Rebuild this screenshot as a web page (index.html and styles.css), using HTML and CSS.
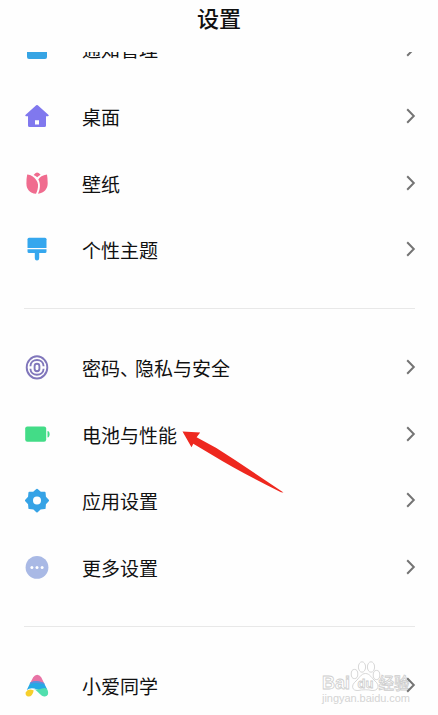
FILE: index.html
```html
<!DOCTYPE html>
<html lang="zh-CN">
<head>
<meta charset="utf-8">
<title>设置</title>
<link rel="stylesheet" href="styles.css">
</head>
<body>
<svg width="0" height="0" class="defs"><defs>
<symbol id="chev" viewBox="0 0 10 16"><path d="M1.2 1.2 7.800 8 1.200 14.800" fill="none" stroke="#747474" stroke-width="2"/></symbol>
</defs></svg>
<header class="title">设置</header>
<main class="list">
  <div class="row first"><svg class="icon" viewBox="0 0 26 26"><rect x="3" y="3" width="20" height="19" rx="2" fill="#36a4e4"/></svg><span class="label">通知管理</span><svg class="chev"><use href="#chev"/></svg></div>
  <div class="row"><svg class="icon" viewBox="0 0 26 26"><path fill="#8078ee" fill-rule="evenodd" d="M12.200 1.300Q13 .7 13.800 1.300L24.600 11Q25.200 12 24 12.200H22V21.500Q22 23 20.500 23H5.500Q4 23 4 21.500V12.200H2Q.8 12 1.400 11ZM11 16.200V20.500H15V16.200Z"/></svg><span class="label">桌面</span><svg class="chev"><use href="#chev"/></svg></div>
  <div class="row"><svg class="icon" viewBox="0 0 26 26"><g fill="#f06c8f"><path d="M3.200 3.500C7.500 3.700 13.400 8 14 13.500 14.300 17 13.200 20 12 22.800 5.500 22.500 2.400 18 2.400 12.500Q2.400 7.500 3.200 3.500Z"/><path d="M23 3.500C18.500 4 15.800 6 14.300 8.400 16.700 12.500 16.300 18 14 22.800 20.500 22 23.800 17.500 23.700 12Q23.600 7 23 3.500Z"/><path d="M9.600 4.100Q11.300 1.600 13 1.600T16.600 3.800Q14.500 4.800 13.200 6.300 11.600 4.900 9.600 4.100Z"/></g></svg><span class="label">壁纸</span><svg class="chev"><use href="#chev"/></svg></div>
  <div class="row"><svg class="icon" viewBox="0 0 26 26"><g fill="#35a7ee"><path d="M5 .8H21Q22.500.8 22.500 2.300V11H3.500V2.300Q3.500.8 5 .8Z"/><path d="M3.500 12.300H22.500V14.500Q22.500 16 21 16H15.200V21.300Q15.200 23.500 13 23.500T10.800 21.300V16H5Q3.500 16 3.500 14.500Z"/></g></svg><span class="label">个性主题</span><svg class="chev"><use href="#chev"/></svg></div>
  <div class="divider"></div>
  <div class="row"><svg class="icon" viewBox="0 0 26 26"><g fill="none" stroke="#8076bb" stroke-width="1.900"><ellipse cx="13" cy="12.400" rx="10.300" ry="11.100"/><path d="M6.400 11.200C6.700 3 19.300 3 19.600 11.200M19.600 13.800C19.300 21.800 6.700 21.800 6.400 13.800"/><rect x="10.600" y="8.800" width="4.800" height="7.400" rx="2.400"/></g></svg><span class="label">密码<span class="comma">、</span>隐私与安全</span><svg class="chev"><use href="#chev"/></svg></div>
  <div class="row"><svg class="icon" viewBox="0 0 26 26"><g fill="#43dc87"><rect x="1.200" y="4.400" width="21" height="15.400" rx="2.200"/><path d="M23.500 9Q25.600 9.200 25.600 12.200T23.500 15.400Z"/></g></svg><span class="label">电池与性能</span><svg class="chev"><use href="#chev"/></svg></div>
  <div class="row"><svg class="icon" viewBox="0 0 26 26"><path fill="#36a3e6" stroke="#36a3e6" stroke-width="2" stroke-linejoin="round" d="M13 1.700 16.200 4.400 20.600 4.800 21 9.300 24 12.500 21 15.700 20.600 20.100 16.200 20.600 13 23.400 9.800 20.600 5.400 20.100 5 15.700 2 12.500 5 9.300 5.400 4.800 9.800 4.400Z"/><circle cx="13" cy="12.500" r="4" fill="#fff"/></svg><span class="label">应用设置</span><svg class="chev"><use href="#chev"/></svg></div>
  <div class="row"><svg class="icon" viewBox="0 0 26 26"><circle cx="13" cy="12.400" r="11.400" fill="#a9b9e5"/><g fill="#fff"><circle cx="7.900" cy="12.600" r="1.500"/><circle cx="13" cy="12.600" r="1.500"/><circle cx="18.100" cy="12.600" r="1.500"/></g></svg><span class="label">更多设置</span><svg class="chev"><use href="#chev"/></svg></div>
  <div class="divider"></div>
  <div class="row"><svg class="icon" viewBox="0 0 26 26"><path fill="#e873a5" d="M6.200 10 9.200 4.300Q10.800 1.700 13.200 1.700T17.200 4.300L20.300 10.500Q13 8.500 6.200 10Z"/><path fill="#25a9e5" d="M6.400 9.500Q13 7 20 10L23 16 19 18 13 16.500Q7 14 2.800 17Z"/><path fill="#5b8fe0" d="M6.400 9.500Q13 7 20 10L20.800 11.600Q13 8.500 5.600 11.100Z"/><path fill="#f6cf2c" d="M1.600 19.500Q4 15 9.700 17.500 8.500 23.600 4.500 23.500 1.200 23.200 1.600 19.500Z"/><path fill="#51dfae" d="M9.700 16Q14 17.300 18 15.500 21.800 13.800 23.500 16.800 25.800 22.500 21 23.500C17 24 15 18.500 9.700 16Z"/></svg><span class="label">小爱同学</span><svg class="chev"><use href="#chev"/></svg></div>
</main>
<svg class="arrow" viewBox="0 0 106 66"><path fill="#ee281f" d="M2.500 1.500 20.200 2.400 16.600 7.300Q36 17 55 30L103.500 62.500 101 62.300Q60 42 33 25.500L13.300 13.700 11.500 17.300Z"/></svg>
<svg class="watermark" viewBox="0 0 100 50">
  <g fill="#fff" stroke="#cdcdcd" stroke-width=".8">
    <text class="wm-bold" x="2" y="30" textLength="28" lengthAdjust="spacingAndGlyphs">Bai</text>
    <ellipse cx="34.500" cy="15" rx="3.300" ry="4.600"/><ellipse cx="42" cy="8" rx="3.600" ry="5.200"/><ellipse cx="51" cy="8" rx="3.600" ry="5.200"/><ellipse cx="56.500" cy="16" rx="3.300" ry="4.600"/>
    <path d="M45.500 14.500C41 14.500 39 19.500 36 22 30.500 26.500 32 32 38 31.500 43 30.500 48 30.500 52 31.500 58 32 60.500 26.500 55 22 52 19.500 50 14.500 45.500 14.500Z"/>
    <text class="wm-du" x="37.500" y="29" textLength="16">du</text>
    <text class="wm-cn" x="58.500" y="29.500" textLength="31" lengthAdjust="spacingAndGlyphs">经验</text>
  </g>
  <text class="wm-url" x="2" y="42.500" textLength="88">jingyan.baidu.com</text>
</svg>
</body>
</html>
```
FILE: styles.css
```css
body {
  position: relative;
  width: 438px;
  height: 715px;
  margin: 0;
  overflow: hidden;
  background: #fefefe;
  color: #111;
  font-family: "Noto Sans CJK SC", sans-serif;
}
.defs { position: absolute; }
.title {
  height: 52px;
  line-height: 35px;
  text-align: center;
  font-size: 22px;
  font-weight: 500;
}
.list {
  height: 663px;
  overflow: hidden;
}
.row {
  display: flex;
  align-items: center;
  height: 66.8px;
  padding: 0 22px 0 24px;
}
.first { margin-top: -35.4px; }
.icon {
  flex: none;
  width: 26px;
  height: 26px;
}
.label {
  flex: 1;
  margin-left: 32px;
  font-size: 19px;
  line-height: 28px;
  white-space: nowrap;
}
.first .label { margin-top: -2px; }
.comma { letter-spacing: -4px; }
.chev {
  position: relative;
  z-index: 2;
  width: 10px;
  height: 16px;
  margin-bottom: 2px;
}
.divider {
  height: 26.7px;
  margin: 24px 23px 0 24px;
  border-top: 1px solid #e8e8e8;
  box-sizing: border-box;
}
.arrow {
  position: absolute;
  left: 180px;
  top: 430px;
  width: 106px;
  height: 66px;
}
.watermark {
  position: absolute;
  left: 320px;
  top: 659px;
  width: 100px;
  height: 50px;
  z-index: 1;
}
.wm-bold { font: bold 19px "Liberation Sans", sans-serif; }
.wm-du { font: bold 13px "Liberation Sans", sans-serif; }
.wm-cn { font: 500 16px "Noto Sans CJK SC", sans-serif; }
.wm-url {
  font: 11px "Liberation Sans", sans-serif;
  fill: #d4d4d4;
}
```
